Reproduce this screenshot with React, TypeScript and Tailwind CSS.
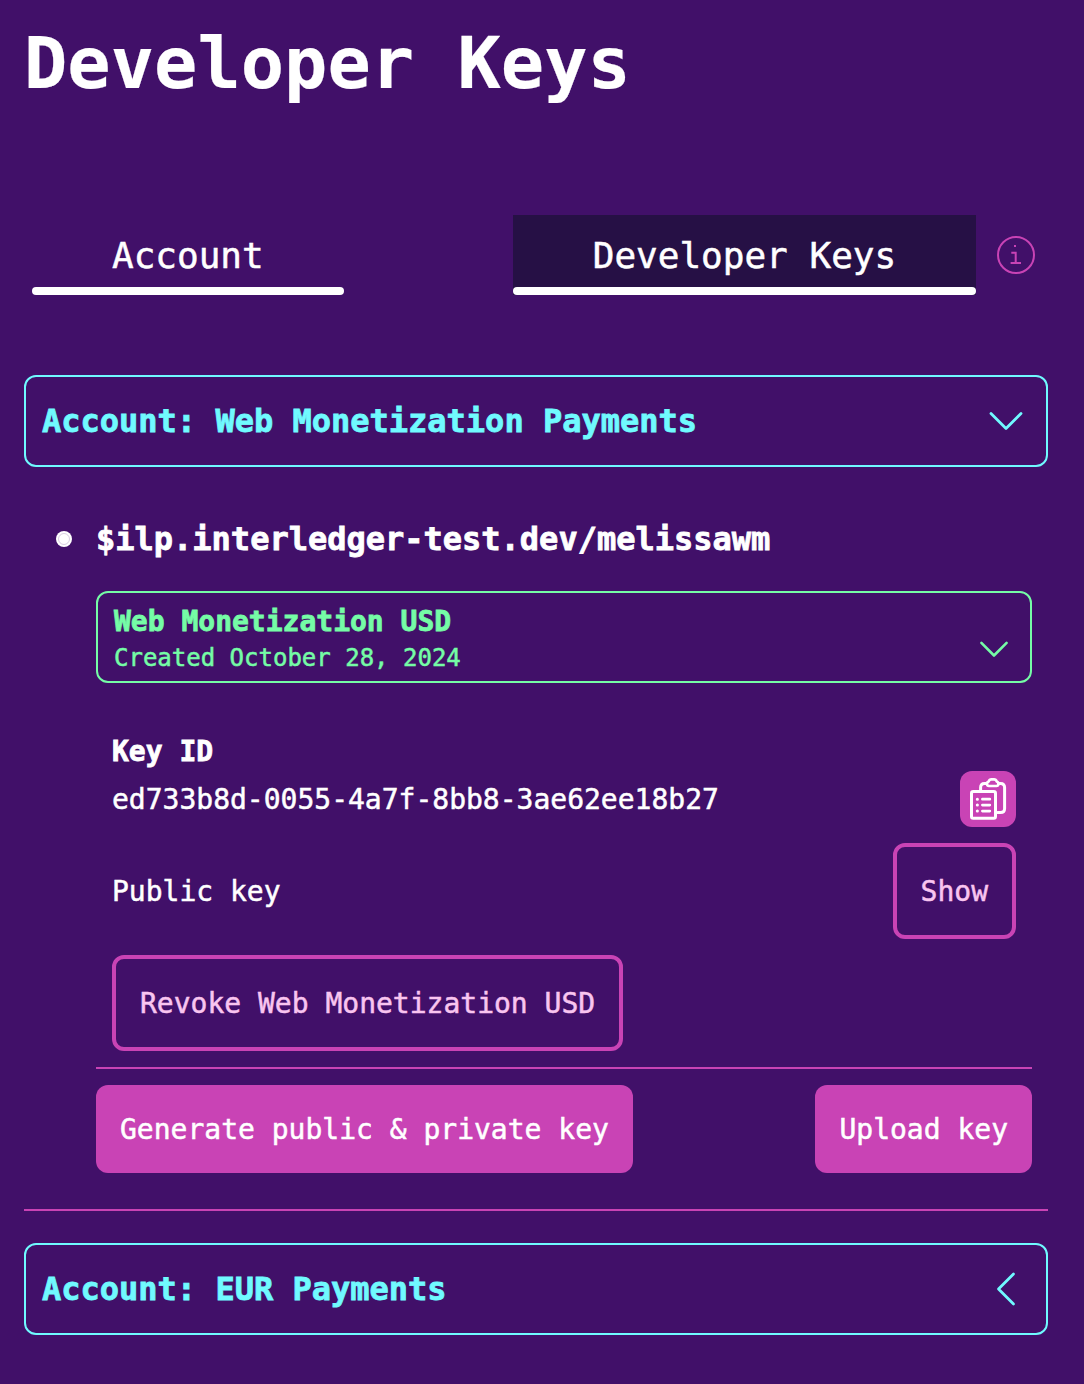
import type { ReactNode } from "react";

type ChevronProps = { className: string; points: string; width: number; height: number };

function Chevron({ className, points, width, height }: ChevronProps) {
  return (
    <svg className={className} width={width} height={height} fill="none" stroke="currentColor" strokeLinecap="round" strokeLinejoin="round">
      <polyline points={points} />
    </svg>
  );
}

function AccountHeader({ title, children }: { title: string; children: ReactNode }) {
  return (
    <button className="flex h-[92px] w-full items-center justify-between rounded-xl border-2 border-[#70faff] pl-4 text-left text-[32px] leading-10 font-bold text-[#70faff] [-webkit-text-stroke:0.8px]">
      <span>{title}</span>
      {children}
    </button>
  );
}

function Tab({ label, active }: { label: string; active?: boolean }) {
  return (
    <div className={active ? "bg-[#261045]" : ""}>
      <div className="flex h-[72px] items-center px-20 pt-2.5 text-4xl">{label}</div>
      <div className="h-2 rounded bg-white" />
    </div>
  );
}

function CopyIcon() {
  return (
    <svg width="56" height="56" viewBox="0 0 56 56" fill="none" stroke="#fff" strokeWidth="3" strokeLinecap="round" strokeLinejoin="round">
      <path d="M20.6 20V16.5Q20.6 12.4 24.5 12.4H26.5M38.5 12.4H40.5Q44.6 12.4 44.6 16.5V37.5Q44.6 41.5 40.5 41.5H37.5" />
      <path d="M29 15C26.6 15 26.2 11.6 28.6 10.6C29.2 9 30 8.4 31.4 8.4H34C35.4 8.4 36.2 9 36.8 10.6C39.2 11.6 38.8 15 36.4 15Z" strokeWidth="2.7" />
      <rect x="11.5" y="20.6" width="24" height="26.7" rx="1.8" />
      <path d="M22.4 28.2H29.8M22.4 34.1H29.8M22.4 40.1H29.8" strokeWidth="2.7" />
      <path d="M17.3 28.2h.1M17.3 34.1h.1M17.3 40.1h.1" strokeWidth="3" />
    </svg>
  );
}

export default function App() {
  return (
    <main className="h-[1384px] w-[1084px] overflow-hidden bg-[#411069] pr-9 pl-6 font-['DejaVu_Sans_Mono',Menlo,monospace] text-[28px] text-white [-webkit-text-stroke:0.5px]">
      <h1 className="h-[215px] pt-[18px] text-[72px] leading-[90px] font-bold [-webkit-text-stroke:0.2px]">Developer Keys</h1>

      <nav className="flex h-20 items-center pl-2">
        <Tab label="Account" />
        <div className="ml-[169px]">
          <Tab label="Developer Keys" active />
        </div>
        <svg className="ml-[21px]" width="38" height="38" fill="none" stroke="#c943b5">
          <circle cx="19" cy="19" r="18" strokeWidth="2" />
          <path d="M14.3 16.7H18.7V27M13.6 27H24" strokeWidth="2" />
          <path d="M17 10H19" strokeWidth="2" />
        </svg>
      </nav>

      <section className="pt-20">
        <AccountHeader title="Account: Web Monetization Payments">
          <Chevron className="mr-[22px] stroke-[2.8]" width={36} height={24} points="3,4.5 18,19.5 33,4.5" />
        </AccountHeader>

        <div className="mt-[52px] flex h-10 items-center pl-8">
          <span className="flex size-4 items-center justify-center rounded-full bg-white">
            <span className="size-3 rounded-full border border-[#411069]/20" />
          </span>
          <h2 className="ml-6 text-[32px] leading-10 font-bold [-webkit-text-stroke:0.8px]">$ilp.interledger-test.dev/melissawm</h2>
        </div>

        <div className="mt-8 mr-4 ml-[72px]">
          <button className="flex h-[92px] w-full justify-between rounded-xl border-2 border-[#75fca6] pl-4 text-left text-[#75fca6]">
            <span>
              <strong className="block pt-[11px] leading-9 font-bold [-webkit-text-stroke:0.8px]">Web Monetization USD</strong>
              <span className="block text-2xl leading-9">Created October 28, 2024</span>
            </span>
            <Chevron className="mt-11 mr-5 stroke-[2.6]" width={32} height={24} points="3.4,5.9 16,18.5 28.6,5.9" />
          </button>

          <div className="mt-12 px-4">
            <h3 className="h-10 pt-px leading-10 font-bold [-webkit-text-stroke:0.8px]">Key ID</h3>
            <div className="flex h-14 items-center justify-between">
              <span className="pt-0.5">ed733b8d-0055-4a7f-8bb8-3ae62ee18b27</span>
              <button className="size-14 rounded-xl bg-[#c943b5]">
                <CopyIcon />
              </button>
            </div>
            <div className="mt-4 flex h-24 items-center justify-between">
              <span className="pt-0.5">Public key</span>
              <button className="h-24 rounded-xl border-4 border-[#c943b5] px-6 pt-0.5 text-[#f9c5f0]">Show</button>
            </div>
            <button className="mt-4 block h-24 rounded-xl border-4 border-[#c943b5] px-6 pt-0.5 text-[#f9c5f0]">Revoke Web Monetization USD</button>
          </div>

          <div className="mt-4 flex justify-between border-t-2 border-[#c943b5] pt-4">
            <button className="h-[88px] rounded-xl bg-[#c943b5] px-6 pt-0.5">Generate public &amp; private key</button>
            <button className="h-[88px] rounded-xl bg-[#c943b5] px-6 pt-0.5">Upload key</button>
          </div>
        </div>
      </section>

      <section className="mt-9 border-t-2 border-[#c943b5] pt-8">
        <AccountHeader title="Account: EUR Payments">
          <Chevron className="mr-[28px] stroke-[2.8]" width={24} height={36} points="19.5,3 4.5,18 19.5,33" />
        </AccountHeader>
      </section>
    </main>
  );
}
